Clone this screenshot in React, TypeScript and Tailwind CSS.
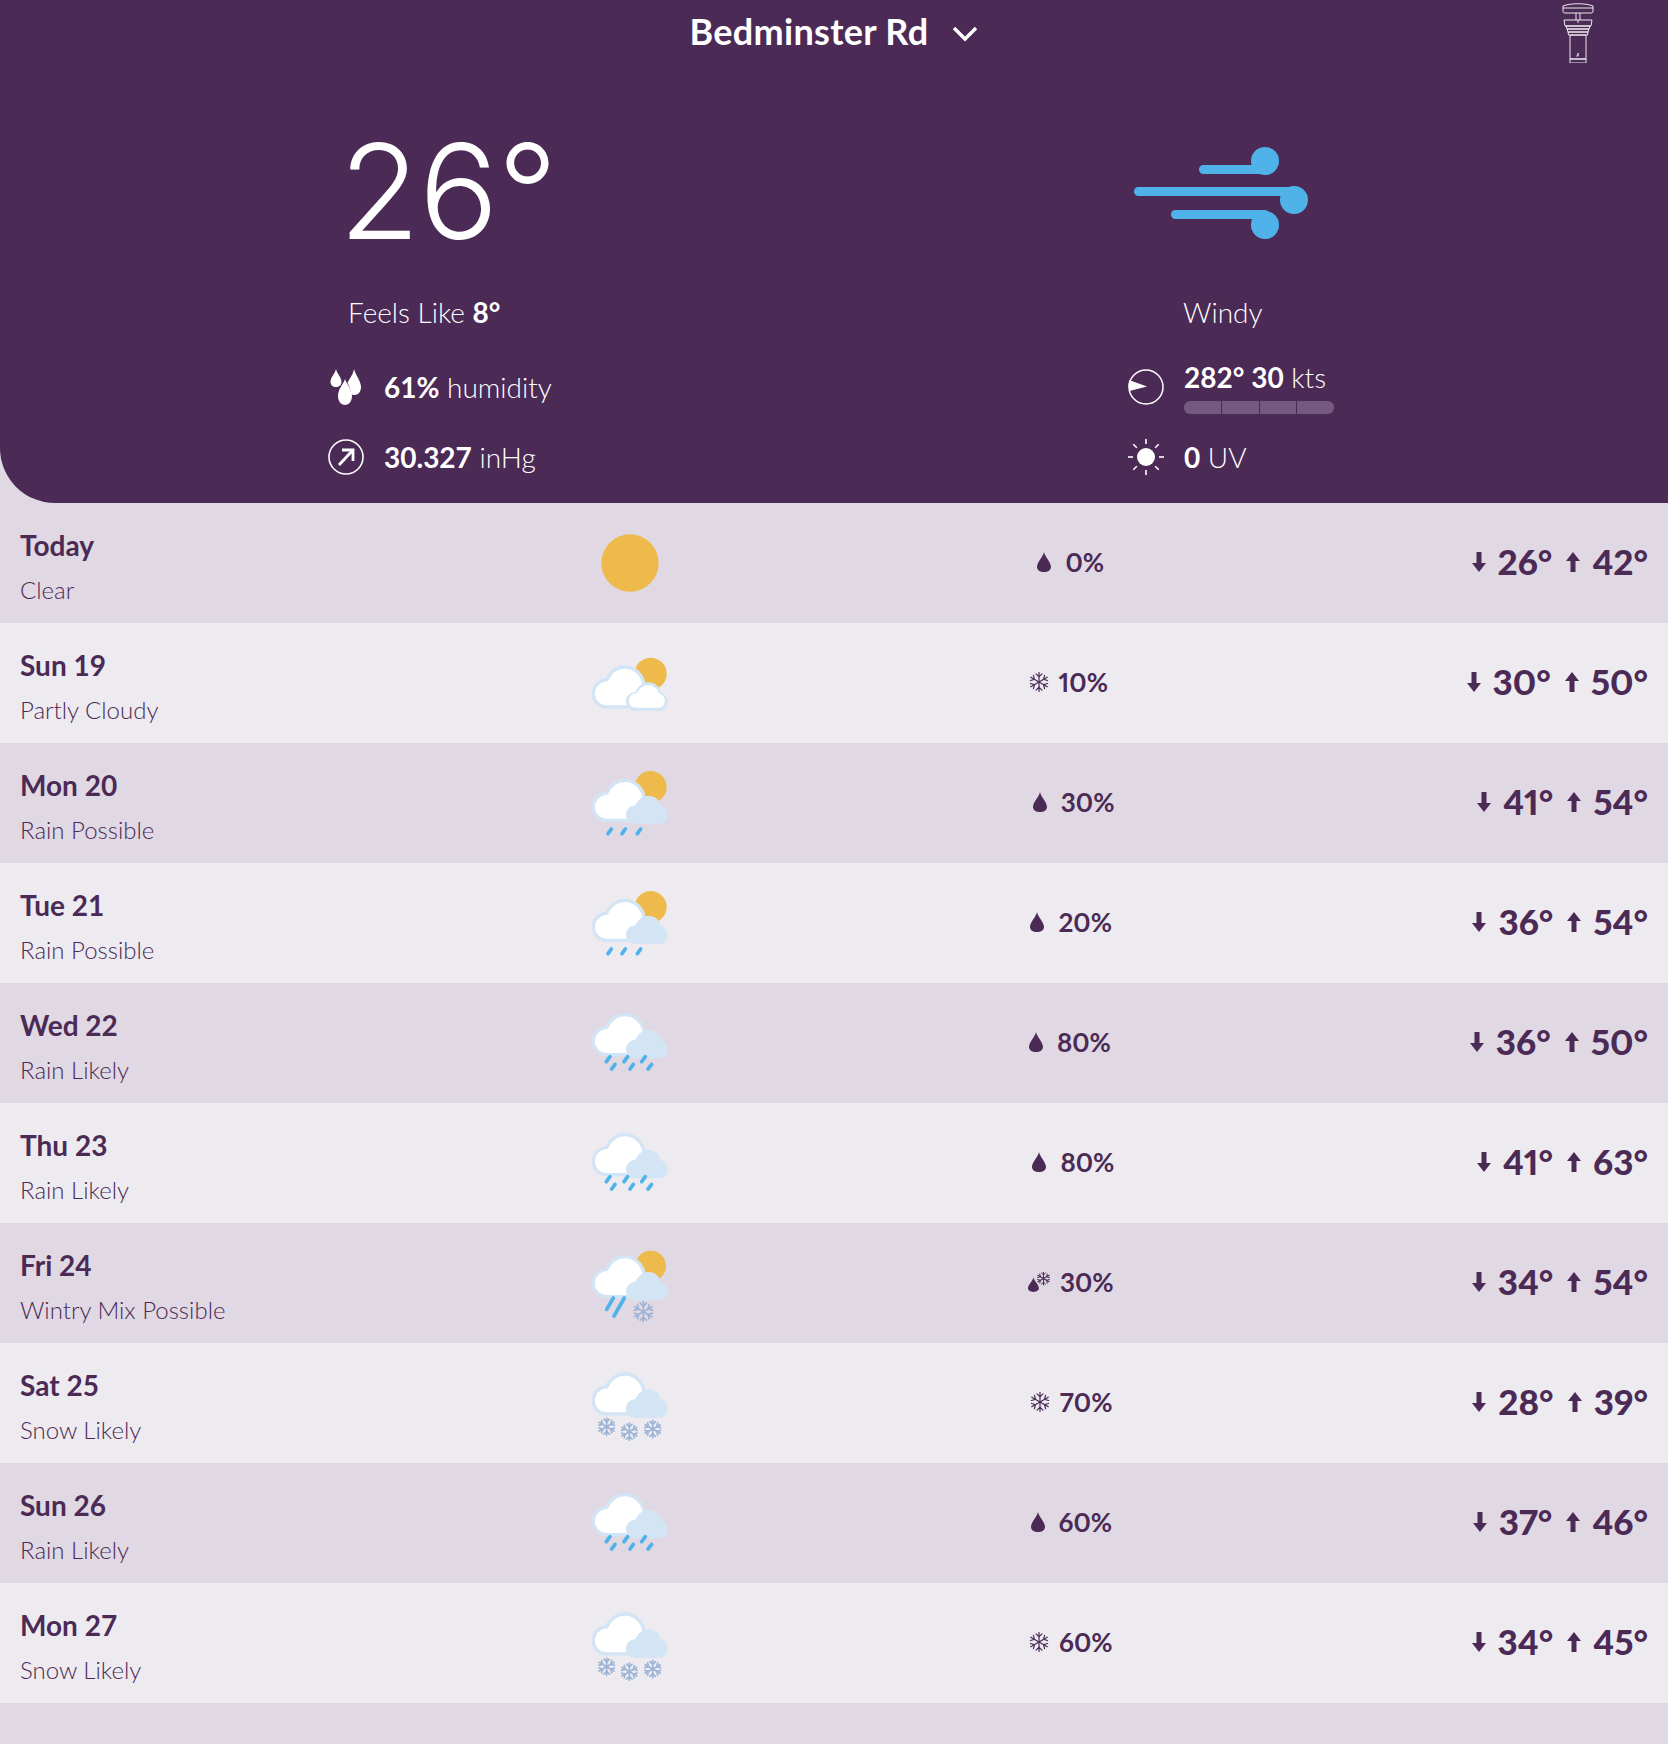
import React from 'react';

type Sky = 'clear' | 'partly' | 'rainPossible' | 'rainLikely' | 'mix' | 'snow';
type Precip = 'rain' | 'snow' | 'mix';

interface Day {
  name: string;
  desc: string;
  sky: Sky;
  precip: Precip;
  chance: number;
  low: number;
  high: number;
}

const days: Day[] = [
  { name: 'Today', desc: 'Clear', sky: 'clear', precip: 'rain', chance: 0, low: 26, high: 42 },
  { name: 'Sun 19', desc: 'Partly Cloudy', sky: 'partly', precip: 'snow', chance: 10, low: 30, high: 50 },
  { name: 'Mon 20', desc: 'Rain Possible', sky: 'rainPossible', precip: 'rain', chance: 30, low: 41, high: 54 },
  { name: 'Tue 21', desc: 'Rain Possible', sky: 'rainPossible', precip: 'rain', chance: 20, low: 36, high: 54 },
  { name: 'Wed 22', desc: 'Rain Likely', sky: 'rainLikely', precip: 'rain', chance: 80, low: 36, high: 50 },
  { name: 'Thu 23', desc: 'Rain Likely', sky: 'rainLikely', precip: 'rain', chance: 80, low: 41, high: 63 },
  { name: 'Fri 24', desc: 'Wintry Mix Possible', sky: 'mix', precip: 'mix', chance: 30, low: 34, high: 54 },
  { name: 'Sat 25', desc: 'Snow Likely', sky: 'snow', precip: 'snow', chance: 70, low: 28, high: 39 },
  { name: 'Sun 26', desc: 'Rain Likely', sky: 'rainLikely', precip: 'rain', chance: 60, low: 37, high: 46 },
  { name: 'Mon 27', desc: 'Snow Likely', sky: 'snow', precip: 'snow', chance: 60, low: 34, high: 45 },
];

const SMALL_CLOUD =
  'M195 263 C178 263 168 250 168 236 C168 220 180 208 196 207 C204 190 218 178 235 178 C255 178 270 192 272 208 C285 212 293 224 293 236 C293 252 282 263 270 263 Z';

const Flake = ({ x, y, r, color, width }: { x: number; y: number; r: number; color: string; width: number }) => (
  <g transform={`translate(${x} ${y})`} stroke={color} strokeWidth={width} fill="none" strokeLinecap="round">
    {[0, 60, 120, 180, 240, 300].map((a) => (
      <g key={a} transform={`rotate(${a})`}>
        <line x1="0" y1="0" x2="0" y2={-r} />
        <path d={`M${-r * 0.32} ${-r * 0.86} L0 ${-r * 0.55} L${r * 0.32} ${-r * 0.86}`} />
      </g>
    ))}
  </g>
);

const Rain = ({ lines }: { lines: number[][] }) => (
  <g stroke="#4fb3ea" strokeWidth="11" strokeLinecap="round">
    {lines.map((l, i) => (
      <line key={i} x1={l[0]} y1={l[1]} x2={l[2]} y2={l[3]} />
    ))}
  </g>
);

const rainPossible = [
  [124, 278, 114, 292],
  [166, 278, 156, 292],
  [212, 278, 202, 292],
];
const rainLikely = [
  [120, 258, 109, 273],
  [173, 258, 162, 273],
  [226, 258, 215, 273],
  [135, 281, 125, 295],
  [190, 281, 180, 295],
  [245, 281, 234, 295],
];

const SkyIcon = ({ sky }: { sky: Sky }) => {
  if (sky === 'clear') {
    return (
      <svg className="w-[90px] h-[80px]" viewBox="45 60 270 240">
        <circle cx="180" cy="180" r="86" fill="#edba4b" />
      </svg>
    );
  }
  const offset = { partly: 0, rainPossible: -20, rainLikely: -37, mix: -31, snow: -39 }[sky];
  const hasSun = sky === 'partly' || sky === 'rainPossible' || sky === 'mix';
  return (
    <svg className="w-[90px] h-[80px]" viewBox="45 60 270 240" overflow="visible">
      <g transform={`translate(0 ${offset})`}>
        {hasSun && <circle cx="242" cy={sky === 'mix' ? 160 : 152} r={sky === 'mix' ? 46 : 48} fill="#edba4b" />}
        <path
          d="M112 252 C86 252 70 233 70 212 C70 190 87 172 110 170 C122 146 142 132 165 132 C195 132 219 155 223 188 C240 195 250 215 240 252 Z"
          fill="#ffffff"
          stroke="#d3e5f4"
          strokeWidth="10"
          strokeLinejoin="round"
        />
        {sky === 'partly' ? (
          <g>
            <path d={SMALL_CLOUD} fill="#d3e5f4" />
            <path d={SMALL_CLOUD} fill="#ffffff" transform="translate(230.5 220.5) scale(0.86 0.8) translate(-230.5 -220.5)" />
          </g>
        ) : (
          <path d={SMALL_CLOUD} fill="#d3e5f4" />
        )}
        {sky === 'rainPossible' && <Rain lines={rainPossible} />}
        {sky === 'rainLikely' && <Rain lines={rainLikely} />}
        {sky === 'mix' && (
          <g>
            <Rain
              lines={[
                [130, 256, 110, 290],
                [163, 256, 132, 310],
              ]}
            />
            <Flake x={220} y={297} r={30} color="#9db3d6" width={5} />
          </g>
        )}
        {sky === 'snow' && (
          <g>
            <Flake x={110} y={290} r={26} color="#9db3d6" width={5} />
            <Flake x={178} y={305} r={26} color="#9db3d6" width={5} />
            <Flake x={248} y={297} r={26} color="#9db3d6" width={5} />
          </g>
        )}
      </g>
    </svg>
  );
};

const DROP = 'M7 0 C8 5 14 10 14 15 C14 18 11 20 7 20 C3 20 0 18 0 15 C0 10 6 5 7 0 Z';

const PrecipIcon = ({ kind }: { kind: Precip }) => {
  if (kind === 'rain') {
    return (
      <svg className="w-[14px] h-[20px] mr-[4px]" viewBox="0 0 14 20">
        <path d={DROP} fill="#4b2a56" />
      </svg>
    );
  }
  if (kind === 'snow') {
    return (
      <svg className="w-[20px] h-[20px]" viewBox="-10 -10 20 20">
        <Flake x={0} y={0} r={9.5} color="#4b2a56" width={1.2} />
      </svg>
    );
  }
  return (
    <svg className="w-[22px] h-[20px]" viewBox="0 0 22 20">
      <path d={DROP} fill="#4b2a56" transform="translate(0 5.5) scale(0.78 0.72)" />
      <Flake x={15.5} y={6.5} r={6.5} color="#4b2a56" width={1} />
    </svg>
  );
};

const TempArrow = ({ up }: { up?: boolean }) => (
  <svg className={`w-[14px] h-[20px] ${up ? 'rotate-180' : ''}`} viewBox="0 0 14 20">
    <path d="M4.500 0 H9.500 V11 H14 L7 20 L0 11 H4.500 Z" fill="#4b2a56" />
  </svg>
);

const DayRow = ({ day, index }: { day: Day; index: number }) => (
  <div className={`flex items-center h-[120px] pr-5 ${index % 2 === 0 ? 'bg-[#e0d8e3]' : 'bg-[#edebf0]'}`}>
    <div className="w-[585px] pl-5 pt-[6px]">
      <div className="text-[28px] leading-[34px] font-bold">{day.name}</div>
      <div className="text-[24px] leading-[30px] mt-[13px] font-light">{day.desc}</div>
    </div>
    <SkyIcon sky={day.sky} />
    <div className="flex-1 flex items-center justify-center gap-[10px] pb-[2px] pr-[5px]">
      <PrecipIcon kind={day.precip} />
      <span className="text-[26px] font-bold proportional-nums">{day.chance}%</span>
    </div>
    <div className="flex items-center pb-[3px]">
      <TempArrow />
      <span className="text-[35px] leading-none font-black proportional-nums ml-[12px] mr-[14px]">{day.low}°</span>
      <TempArrow up />
      <span className="text-[35px] leading-none font-black proportional-nums ml-[12px]">{day.high}°</span>
    </div>
  </div>
);

const StationIcon = () => (
  <svg className="w-[32px] h-[60px]" viewBox="0 0 32 60" fill="none" stroke="#ffffff" strokeWidth="0.9">
    <path d="M1 3 C8 0 24 0 31 3 V8 C31 10 30 10 28 10 H4 C2 10 1 10 1 8 Z" />
    <path d="M1 5 H31" />
    <path d="M14 10 V17 M18 10 V17 M16 17 V20" />
    <path d="M2 17 H30 L29 23 H3 Z" />
    <path d="M4 23 H28 L27 26 H5 Z M5 26 H27 L26 29 H6 Z M6 29 H26 L25.500 32 H6.500 Z" />
    <path d="M8 32 H24 V56 H8 Z" />
    <path d="M8 56 H24 V60 H8 Z" />
    <path d="M16 50 V53 M14.500 53 H16" strokeWidth="1.2" />
  </svg>
);

const WindIcon = () => (
  <svg className="w-[174px] h-[92px] ml-[6px]" viewBox="0 0 174 92" fill="#4fb3ea">
    <rect x="65" y="18" width="70" height="9" rx="4.5" />
    <circle cx="131" cy="14" r="14" />
    <rect x="0" y="40" width="165" height="9" rx="4.5" />
    <circle cx="160" cy="53" r="14" />
    <rect x="37" y="63" width="98" height="9" rx="4.5" />
    <circle cx="131" cy="78" r="14" />
  </svg>
);

const HumidityIcon = () => (
  <svg className="w-[36px] h-[36px]" viewBox="0 0 36 36" fill="#ffffff">
    <path d="M8 0 C9 5 13.500 8 13.500 13 C13.500 16 11 18 8 18 C5 18 2.500 16 2.500 13 C2.500 8 7 5 8 0 Z" />
    <path d="M26 0 C27.500 6 33 12 33 18 C33 23 30 26 26.500 26 C25 26 24 25.500 23 25 C23 20 20.500 16 19.500 14 C21 10 25 6 26 0 Z" />
    <path d="M17 10 C18.500 15 24 20 24 27 C24 32 21 36 17 36 C13 36 10 32 10 27 C10 20 15.500 15 17 10 Z" />
  </svg>
);

const PressureIcon = () => (
  <svg className="w-[36px] h-[36px]" viewBox="0 0 36 36" fill="none" stroke="#ffffff">
    <circle cx="18" cy="18" r="17" strokeWidth="1.6" />
    <path d="M11 26 L24 12" strokeWidth="2.8" />
    <path d="M14 11 H25 V22" strokeWidth="2.8" />
  </svg>
);

const DialIcon = () => (
  <svg className="w-[36px] h-[36px]" viewBox="0 0 36 36" fill="none">
    <circle cx="18" cy="18" r="17" stroke="#ffffff" strokeWidth="1.5" />
    <path d="M19 17.500 L1 11 C0.500 15 0.500 19 1.500 22 Z" fill="#ffffff" />
  </svg>
);

const SunIcon = () => (
  <svg className="w-[36px] h-[36px]" viewBox="-18 -18 36 36" stroke="#ffffff" strokeWidth="1.6">
    <circle r="9" fill="#ffffff" stroke="none" />
    {[0, 45, 90, 135, 180, 225, 270, 315].map((a) => (
      <line key={a} x1="0" y1="-13" x2="0" y2="-18" transform={`rotate(${a})`} />
    ))}
  </svg>
);

const StatRow = ({ icon, children }: { icon: React.ReactNode; children: React.ReactNode }) => (
  <div className="flex items-center gap-5 h-[70px] text-[28px] font-light">
    {icon}
    <div>{children}</div>
  </div>
);

export default function App() {
  return (
    <div className="min-h-[1744px] bg-[#e0d8e3] text-[#4b2a56] font-['Lato','Noto_Sans',sans-serif]">
      {/* Header */}
      <div className="bg-[#4b2a56] text-white rounded-bl-[55px] h-[503px]">
        <div className="grid grid-cols-[1fr_auto_1fr] h-[66px]">
          <div />
          <div className="flex items-center gap-[24px] pb-[4px]">
            <span className="text-[36px] leading-none font-bold tracking-[0.3px]">Bedminster Rd</span>
            <svg className="w-[26px] h-[16px] mt-[6px]" viewBox="0 0 26 16" fill="none" stroke="#ffffff" strokeWidth="3.4">
              <path d="M2 2 L13 13 L24 2" />
            </svg>
          </div>
          <div className="flex justify-end pr-[74px] pt-[3px]">
            <StationIcon />
          </div>
        </div>

        <div className="flex pl-[328px]">
          <div className="w-[800px]">
            <div className="h-[219px] pl-[11px] pt-[50px]">
              <div className="text-[132px] leading-[150px] font-light font-['Inter'] tracking-[-1px]">26°</div>
            </div>
            <div className="h-[54px] flex items-center pl-5 text-[28px] font-light">
              <span>
                Feels Like <span className="font-bold">8°</span>
              </span>
            </div>
            <div className="mt-[13px]">
              <StatRow icon={<HumidityIcon />}>
                <span className="font-bold">61%</span> humidity
              </StatRow>
              <StatRow icon={<PressureIcon />}>
                <span className="font-bold">30.327</span> inHg
              </StatRow>
            </div>
          </div>

          <div className="flex-1">
            <div className="h-[219px] pt-[81px]">
              <WindIcon />
            </div>
            <div className="h-[54px] flex items-center pl-[55px] text-[28px] font-light">Windy</div>
            <div className="mt-[13px]">
              <StatRow icon={<DialIcon />}>
                <div className="leading-[34px]">
                  <span className="font-bold">282° 30</span> kts
                </div>
                <div className="grid grid-cols-4 gap-px w-[150px] h-[13px] mt-[7px] rounded-md overflow-hidden">
                  <div className="bg-[#76597f]" />
                  <div className="bg-[#76597f]" />
                  <div className="bg-[#76597f]" />
                  <div className="bg-[#76597f]" />
                </div>
              </StatRow>
              <StatRow icon={<SunIcon />}>
                <span className="font-bold">0</span> UV
              </StatRow>
            </div>
          </div>
        </div>
      </div>

      {/* Forecast */}
      <div>
        {days.map((day, i) => (
          <DayRow key={day.name} day={day} index={i} />
        ))}
      </div>
    </div>
  );
}
